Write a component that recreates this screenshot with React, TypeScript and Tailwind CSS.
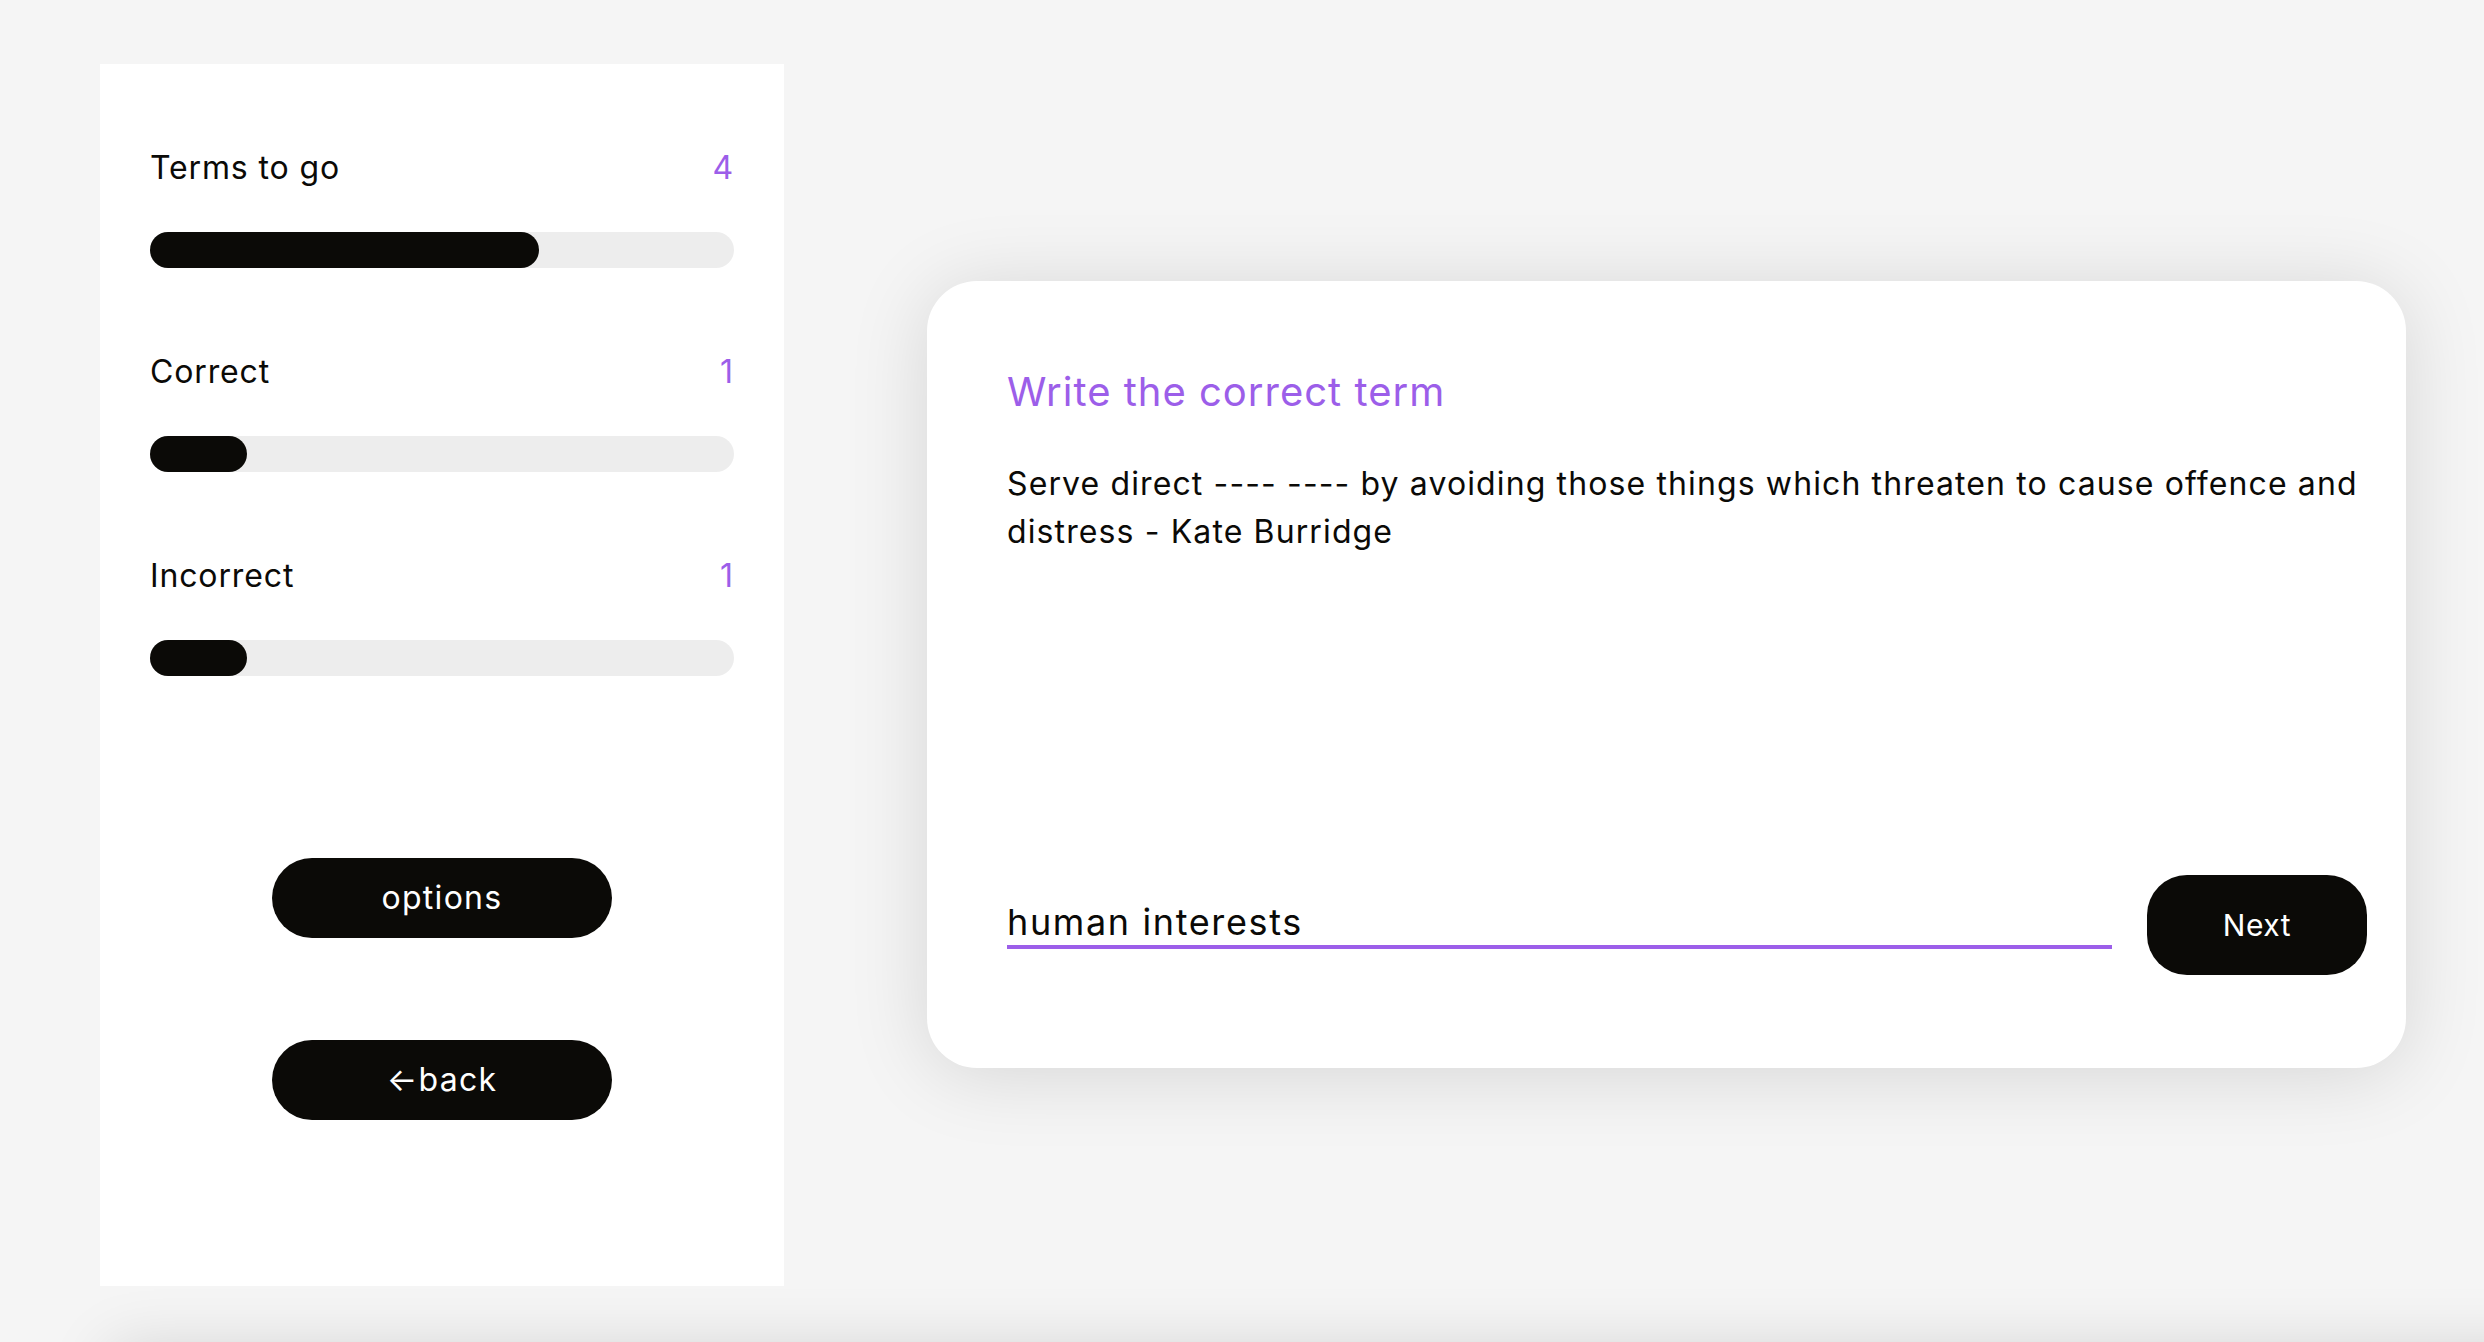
import React from "react";

interface Stat {
  label: string;
  value: number;
}

const TOTAL = 6;

const stats: Stat[] = [
  { label: "Terms to go", value: 4 },
  { label: "Correct", value: 1 },
  { label: "Incorrect", value: 1 },
];

const StatRow: React.FC<{ stat: Stat }> = ({ stat }) => {
  const pct = (stat.value / TOTAL) * 100;
  return (
    <div className="flex flex-col">
      <div className="flex justify-between items-center text-[32px] leading-[48px] tracking-[0.027em]">
        <span className="text-[#0b0a07]">{stat.label}</span>
        <span className="text-[#9c5ee9]">{stat.value}</span>
      </div>
      <div className="mt-10 h-[36px] w-full rounded-full bg-[#ededed]">
        <div
          className="h-full rounded-full bg-[#0b0a07]"
          style={{ width: `${pct}%` }}
        ></div>
      </div>
    </div>
  );
};

const Sidebar: React.FC = () => {
  return (
    <aside className="ml-[100px] mt-[64px] w-[684px] h-[1222px] shrink-0 bg-white px-[50px] pt-[80px] flex flex-col">
      <div className="flex flex-col gap-[80px]">
        {stats.map((s) => (
          <StatRow key={s.label} stat={s} />
        ))}
      </div>
      <div className="flex flex-col items-center mt-[182px] gap-[102px]">
        <button className="w-[340px] h-[80px] rounded-full bg-[#0b0a07] text-white text-[32px] tracking-[0.04em]">
          options
        </button>
        <button className="w-[340px] h-[80px] rounded-full bg-[#0b0a07] text-white text-[32px] tracking-[0.04em]">
          ←back
        </button>
      </div>
    </aside>
  );
};

const QuestionCard: React.FC = () => {
  return (
    <section className="ml-[143px] mt-[281px] w-[1479px] h-[787px] shrink-0 rounded-[50px] bg-white shadow-[0_6px_80px_rgba(0,0,0,0.13)] pl-[80px] pr-[39px] pt-[81px] pb-[93px] flex flex-col">
      <h1 className="text-[40px] leading-[60px] tracking-[0.025em] text-[#9c5ee9]">
        Write the correct term
      </h1>
      <p className="mt-[38px] text-[32px] leading-[48px] tracking-[0.035em] text-[#0b0a07]">
        Serve direct ---- ---- by avoiding those things which threaten to cause
        offence and distress - Kate Burridge
      </p>
      <div className="mt-auto flex items-start gap-[35px]">
        <input
          className="mt-[14px] flex-1 h-[60px] pt-[10px] border-b-4 border-[#9c5ee9] bg-transparent text-[36px] tracking-[0.045em] text-[#0b0a07] outline-none"
          defaultValue="human interests"
        />
        <button className="w-[220px] h-[100px] rounded-[40px] bg-[#0b0a07] text-white text-[30px] tracking-[0.02em]">
          Next
        </button>
      </div>
    </section>
  );
};

export default function App() {
  return (
    <div className="h-screen overflow-hidden bg-[#f5f5f5] font-['Inter','Noto_Sans',sans-serif]">
      <div className="flex items-start">
        <Sidebar />
        <QuestionCard />
      </div>
      {/* next block, sits below the fold */}
      <div className="mt-[62px] ml-[110px] w-[2600px] h-[200px] bg-[#f5f5f5] shadow-[0_0_60px_rgba(0,0,0,0.14)]"></div>
    </div>
  );
}
